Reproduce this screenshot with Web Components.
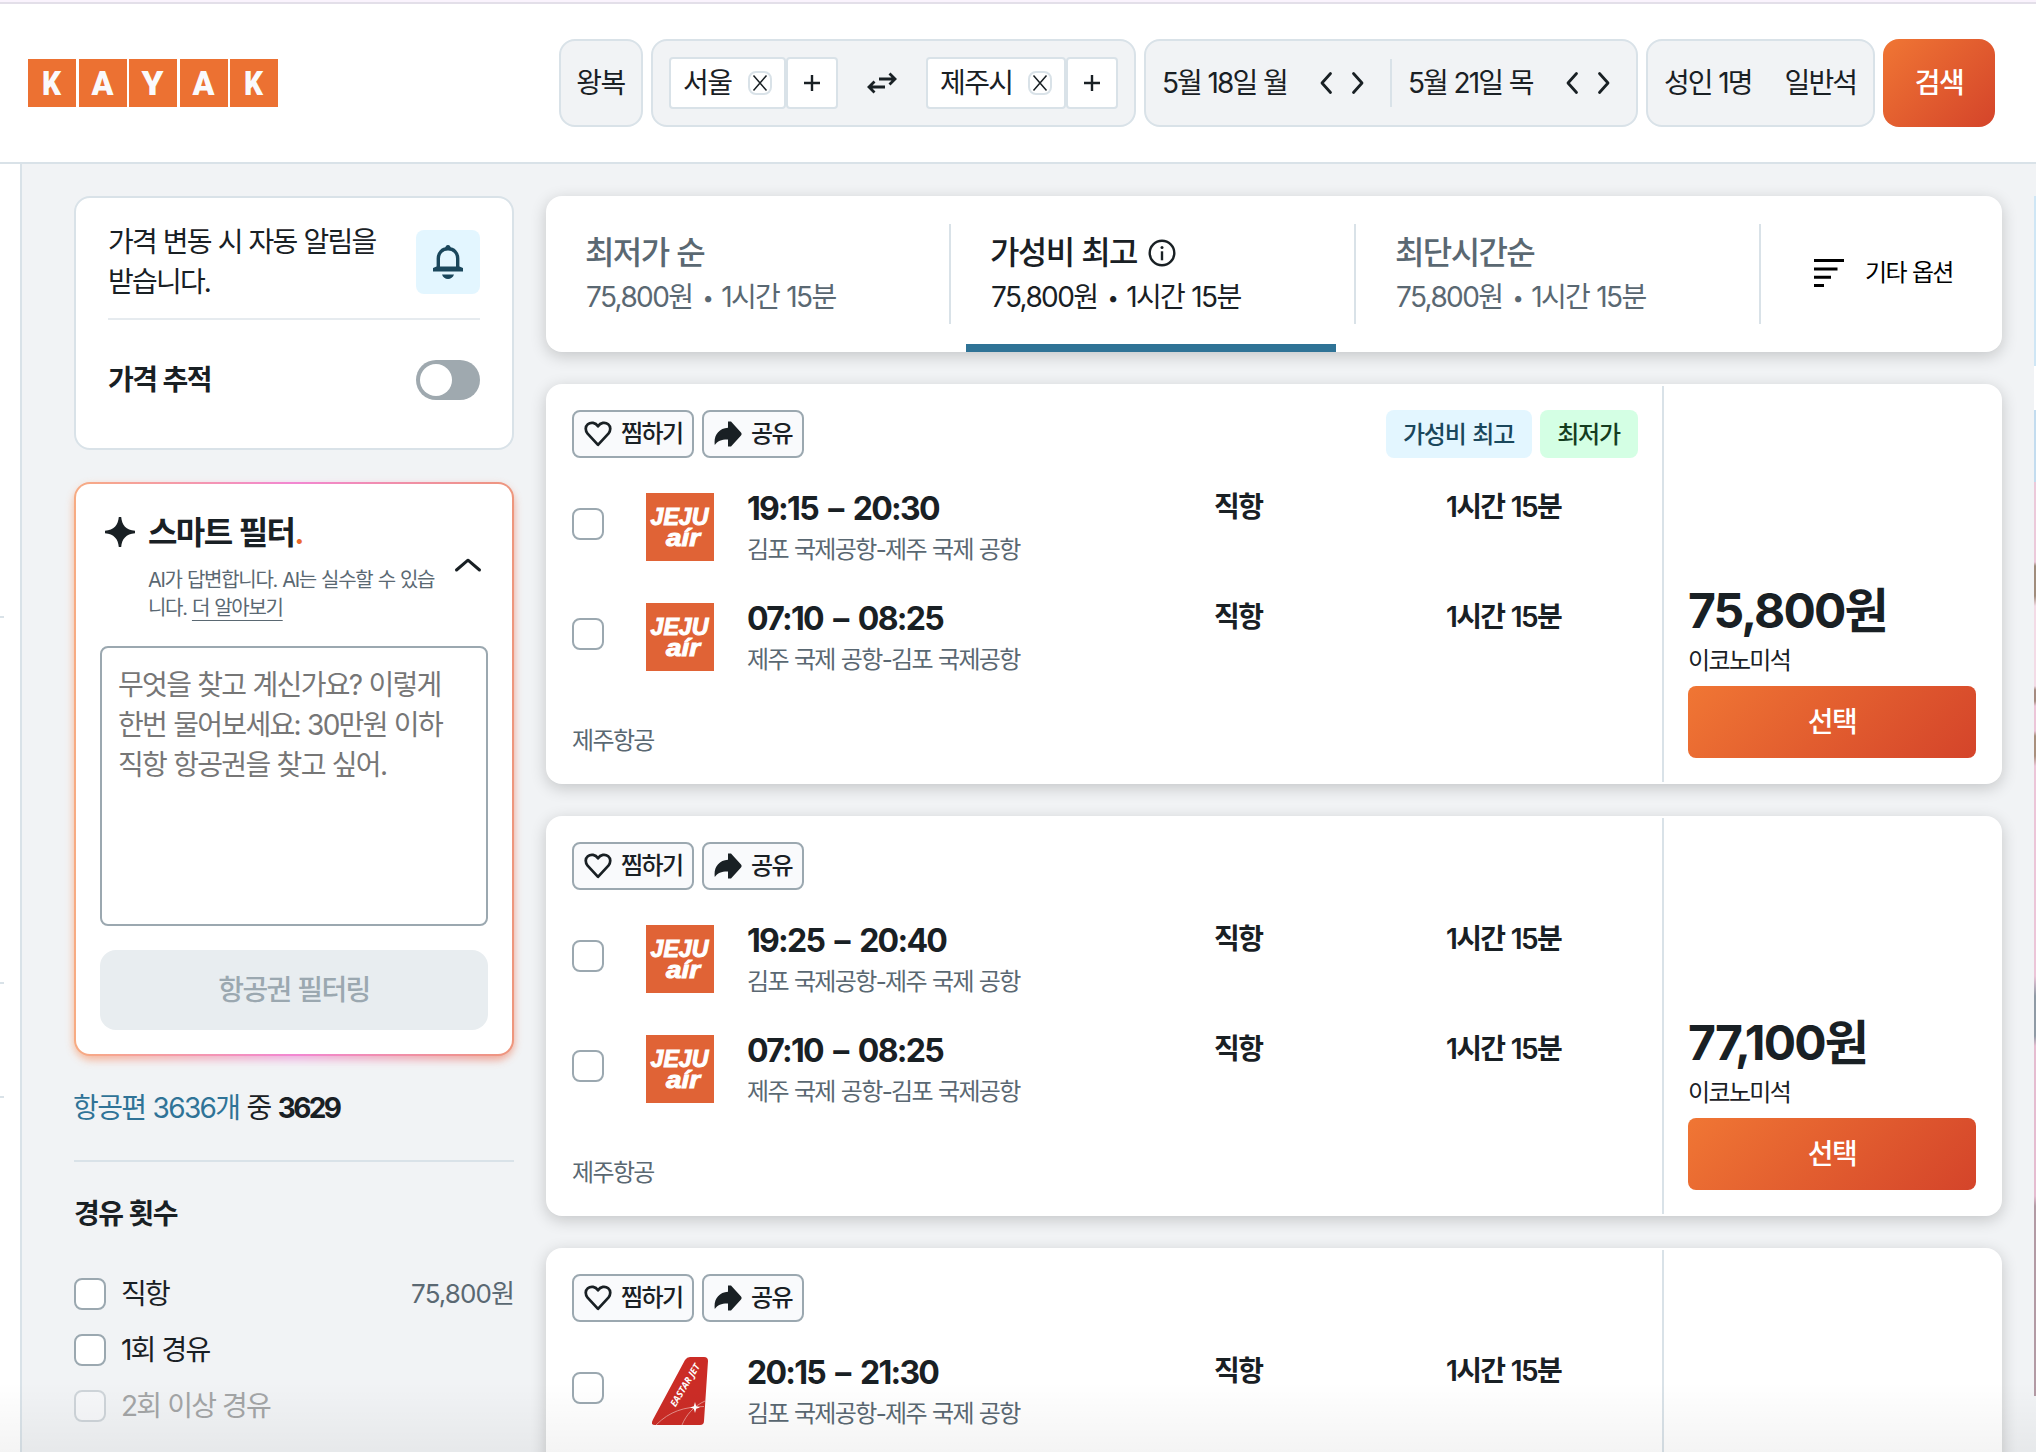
<!DOCTYPE html>
<html lang="ko">
<head>
<meta charset="utf-8">
<title>KAYAK</title>
<style>
  html, body { margin: 0; padding: 0; }
  body {
    width: 2036px;
    height: 1452px;
    overflow: hidden;
    background: #fff;
    color: #192024;
    font-family: Inter, "Noto Sans CJK KR", sans-serif;
    font-size: 28px;
    line-height: 40px;
    letter-spacing: -0.058em;
    word-spacing: 0.03em;
    --line: #d9e2e8;
    --fill: #f1f3f5;
    --muted: #5a6872;
    --edge: #9ba8b0;
    --brand: linear-gradient(135deg, #f07634, #d4442a);
  }
</style>
</head>
<body>
<flight-page></flight-page>

<script>
// Shared reset, every shadow root starts with it
const BASE = `
  *, *::before, *::after { box-sizing: border-box; }
  :host { display: block; box-sizing: border-box; white-space: nowrap; }
  svg { display: block; flex: none; }
`;

function define(name, css, html) {
  customElements.define(name, class extends HTMLElement {
    constructor() {
      super();
      this.attachShadow({ mode: 'open' });
    }
    connectedCallback() {
      const body = typeof html === 'function' ? html(this) : html;
      this.shadowRoot.innerHTML = `<style>${BASE}${css}</style>${body}`;
    }
  });
}

// ---------- icons ----------
const ICONS = {
  close: '<svg width="16" height="18" viewBox="0 0 16 18"><path d="M1.5 1.5l13 15M14.5 1.5l-13 15" stroke="#192024" stroke-width="1.5" fill="none"/></svg>',
  plus: '<svg width="18" height="18" viewBox="0 0 18 18"><path d="M9 1v16M1 9h16" stroke="#192024" stroke-width="2.400" fill="none"/></svg>',
  swap: '<svg width="30" height="22" viewBox="0 0 30 22"><path d="M12 7h15.500M22.500 1.500l5.500 5.500-5.500 5.500M18 15H2.500M7.500 9.500L2 15l5.500 5.500" stroke="#192024" stroke-width="2.800" fill="none"/></svg>',
  left: '<svg width="14" height="24" viewBox="0 0 14 24"><path d="M11.500 2.500L3 12l8.500 9.500" stroke="#192024" stroke-width="2.800" fill="none" stroke-linecap="round" stroke-linejoin="round"/></svg>',
  right: '<svg width="14" height="24" viewBox="0 0 14 24"><path d="M2.500 2.500L11 12l-8.500 9.500" stroke="#192024" stroke-width="2.800" fill="none" stroke-linecap="round" stroke-linejoin="round"/></svg>',
  up: '<svg width="28" height="16" viewBox="0 0 28 16"><path d="M2.500 13L14 3.200 25.500 13" stroke="#192024" stroke-width="3" fill="none" stroke-linecap="round" stroke-linejoin="round"/></svg>',
  bell: '<svg width="30" height="34" viewBox="0 0 30 34"><path d="M5.300 24V13.500C5.300 8 9 3.800 15 3.800S24.700 8 24.700 13.500V24" fill="none" stroke="#1a475c" stroke-width="3.400"/><path d="M12 4.500C12 1.800 13.200 0 15 0s3 1.800 3 4.500zM0 26.500V23l3.500-1.500h23L30 23v3.500zM9 29.500h12c-1 2.800-3.200 4.500-6 4.500s-5-1.700-6-4.500z" fill="#1a475c"/></svg>',
  spark: '<svg width="30" height="30" viewBox="0 0 30 30"><path d="M13.800 0h2.400c.7 8 4.800 13.100 13.800 13.800v2.400C21 16.900 16.900 22 16.200 30h-2.400C13.100 22 9 16.900 0 16.200v-2.400C9 13.100 13.100 8 13.800 0z" fill="#192024"/></svg>',
  info: '<svg width="28" height="28" viewBox="0 0 28 28"><circle cx="14" cy="14" r="12.300" fill="none" stroke="#192024" stroke-width="2.400"/><circle cx="14" cy="8.500" r="1.500" fill="#192024"/><path d="M14 12.300v9" stroke="#192024" stroke-width="2.400"/></svg>',
  sort: '<svg width="30" height="28" viewBox="0 0 30 28"><path d="M0 1.500h30M0 9.900h23.500M0 18.200h17M0 26.500h10" stroke="#000" stroke-width="3"/></svg>',
  heart: '<svg width="28" height="26" viewBox="0 0 28 26"><path d="M14 23.800L3.600 12.600C1 9.500 1.200 5.500 3.800 3.300 6.800.800 11.500 1.400 14 5.300c2.500-3.900 7.200-4.500 10.200-2 2.600 2.200 2.800 6.200.2 9.300z" fill="none" stroke="#192024" stroke-width="2.700" stroke-linejoin="round"/></svg>',
  share: '<svg width="28" height="26" viewBox="0 0 28 26"><path d="M14 .500h3L27 11.500c.8.900.8 2.100 0 3L17 25.500h-3V18.500C8 18.300 3.500 20 .800 24-.600 15 4.500 7.200 14 6.800z" fill="#192024"/></svg>',
};

define('kayak-logo', `
  :host { display: flex; gap: 2.500px; }
  svg { background: #ec7132; }
`, () => [...'KAYAK'].map(c => `
  <svg width="48" height="48" viewBox="0 0 48 48">
    <text x="23.500" y="36" text-anchor="middle" textLength="${c === 'K' ? 19 : 22}" lengthAdjust="spacingAndGlyphs"
      font-family="Roboto, sans-serif" font-weight="900" font-size="34" fill="#fafafc" letter-spacing="0">${c}</text>
  </svg>`).join(''));

// Place chip in the search bar: name, remove box and add button
define('place-chip', `
  :host { display: flex; }
  div {
    height: 52px; border: 2px solid var(--line); border-radius: 4px; background: #fff;
    display: flex; align-items: center;
  }
  .name { padding: 0 12px 0 12px; justify-content: space-between; width: var(--chip-width); }
  i {
    width: 24px; height: 24px; border: 2px solid var(--line); border-radius: 8px;
    display: flex; align-items: center; justify-content: center;
  }
  .add { width: 52px; justify-content: center; }
`, `
  <div class="name"><span><slot></slot></span><i>${ICONS.close}</i></div>
  <div class="add">${ICONS.plus}</div>
`);

define('search-bar', `
  :host { display: flex; gap: 8px; }
  .box {
    height: 88px; border: 2px solid var(--line); border-radius: 16px; background: var(--fill);
    display: flex; align-items: center;
  }
  .trip { width: 84px; justify-content: center; padding: 0 1px 0 0; }
  .places { width: 485px; padding: 0 16px; justify-content: space-between; }
  .dates { width: 494px; }
  .date { display: flex; align-items: center; flex: 1; padding: 0 25px 0 16px; }
  .date + .date { border-left: 2px solid var(--line); height: 48px; }
  .date svg { margin-left: auto; }
  .date svg + svg { margin-left: 18px; }
  .people { width: 229px; padding: 0 17px 0 16px; justify-content: space-between; }
  .go { width: 112px; border: 0; background: var(--brand); color: #fff; justify-content: center; font-weight: 500; }
  .date, .people { letter-spacing: -0.07em; }
`, `
  <div class="box trip">왕복</div>
  <div class="box places">
    <place-chip style="--chip-width:117px">서울</place-chip>
    ${ICONS.swap}
    <place-chip style="--chip-width:140px">제주시</place-chip>
  </div>
  <div class="box dates">
    <div class="date">5월 18일 월 ${ICONS.left}${ICONS.right}</div>
    <div class="date">5월 21일 목 ${ICONS.left}${ICONS.right}</div>
  </div>
  <div class="box people"><span>성인 1명</span><span>일반석</span></div>
  <div class="box go">검색</div>
`);

define('top-header', `
  :host {
    height: 164px; border-top: 2px solid #faf3fd; border-bottom: 2px solid var(--line);
    background: #fff; box-shadow: inset 0 2px #e3dfe9;
    display: flex; align-items: center; justify-content: space-between; padding: 2px 41px 0 28px;
  }
`, `<kayak-logo></kayak-logo><search-bar></search-bar>`);

define('price-alert', `
  :host {
    height: 254px; border: 2px solid var(--line); border-radius: 16px; background: #fff;
    padding: 24px 32px 0; letter-spacing: -0.064em;
  }
  .row { display: flex; align-items: center; justify-content: space-between; }
  .bell {
    width: 64px; height: 64px; border-radius: 8px; background: #e3f6ff;
    display: flex; align-items: center; justify-content: center;
  }
  hr { height: 2px; border: 0; margin: 16px 0 40px; background: #e6ebef; }
  b { font-weight: 600; letter-spacing: -0.058em; }
  .toggle { width: 64px; height: 40px; border-radius: 20px; background: #9fa9af; padding: 4px; }
  .toggle::before { content: ""; display: block; width: 32px; height: 32px; border-radius: 50%; background: #fff; }
`, `
  <div class="row"><span>가격 변동 시 자동 알림을<br>받습니다.</span><span class="bell">${ICONS.bell}</span></div>
  <hr>
  <div class="row"><b>가격 추적</b><span class="toggle"></span></div>
`);

define('smart-filter', `
  :host {
    height: 574px; margin-top: 32px; border: 2px solid transparent; border-radius: 16px; padding: 24px;
    background:
      linear-gradient(#fff, #fff) padding-box,
      linear-gradient(90deg, #f7ab82, #f287d2 50%, #ee967c) border-box;
    position: relative;
  }
  /* coloured glow under the card */
  :host::before {
    content: ""; position: absolute; z-index: -1; inset: 2px -2px -6px; border-radius: 18px;
    background: linear-gradient(90deg, #f7ab82, #f0a0dc 50%, #ee967c); filter: blur(4px); opacity: .85;
  }
  .head { display: flex; height: 114px; padding: 4px 6px 0 5px; }
  .text { margin-left: 13px; flex: 1; }
  .spark { margin-top: 5px; }
  h2 { margin: 0; font-size: 32px; line-height: 42px; font-weight: 600; }
  h2 span { color: #ec6a2c; }
  p { margin: 12px 0 0; font-size: 20px; line-height: 28px; color: var(--muted); letter-spacing: -0.064em; }
  u { text-underline-offset: 5px; text-decoration-thickness: 1px; }
  .up { margin-top: 45px; }
  .area {
    height: 280px; margin-top: 24px; border: 2px solid var(--edge); border-radius: 8px; padding: 17px 16px;
    color: #767676; letter-spacing: -0.06em;
  }
  .btn {
    height: 80px; margin-top: 24px; border-radius: 16px; background: #e8edf0; color: var(--edge);
    font-weight: 500; display: flex; align-items: center; justify-content: center;
  }
`, `
  <div class="head">
    <span class="spark">${ICONS.spark}</span>
    <div class="text">
      <h2>스마트 필터<span>.</span></h2>
      <p>AI가 답변합니다. AI는 실수할 수 있습<br>니다. <u>더 알아보기</u></p>
    </div>
    <span class="up">${ICONS.up}</span>
  </div>
  <div class="area">무엇을 찾고 계신가요? 이렇게<br>한번 물어보세요: 30만원 이하<br>직항 항공권을 찾고 싶어.</div>
  <div class="btn">항공권 필터링</div>
`);

define('check-box', `
  :host { width: 32px; height: 32px; border: 2px solid var(--edge); border-radius: 8px; background: #fff; flex: none; }
`, '');

define('filter-option', `
  :host { display: flex; align-items: center; height: 56px; }
  :host([disabled]) check-box { opacity: .4; }
  :host([disabled]) .name { color: #a3a5a6; }
  .name { margin-left: 15px; flex: 1; letter-spacing: -0.064em; }
  .price { font-size: 26px; color: var(--muted); letter-spacing: -0.035em; }
`, el => `
  <check-box></check-box>
  <span class="name"><slot></slot></span>
  <span class="price">${el.getAttribute('price') || ''}</span>
`);

define('side-bar', `
  :host { width: 440px; }
  .count { margin: 32px 0 0 -1px; }
  .count a { color: #2f7397; }
  .count b { font-weight: 700; letter-spacing: -0.095em; }
  hr { height: 2px; border: 0; margin: 32px 0 0; background: var(--line); }
  h3 { margin: 32px 0 32px; font-size: 28px; font-weight: 600; line-height: 40px; }
`, `
  <price-alert></price-alert>
  <smart-filter></smart-filter>
  <div class="count"><a>항공편 3636개</a> 중 <b>3629</b></div>
  <hr>
  <h3>경유 횟수</h3>
  <filter-option price="75,800원">직항</filter-option>
  <filter-option>1회 경유</filter-option>
  <filter-option disabled>2회 이상 경유</filter-option>
`);

define('sort-tab', `
  :host { width: 405px; height: 156px; padding: 37px 0 0 40px; color: var(--muted); position: relative; }
  :host::after { content: ""; position: absolute; right: 0; top: 28px; width: 2px; height: 100px; background: var(--line); }
  :host([active]) { color: #192024; }
  :host([active])::before {
    content: ""; position: absolute; left: 15px; bottom: 0; width: 370px; height: 8px; background: #2f7396;
  }
  .title {
    font-size: 32px; line-height: 40px; font-weight: 500; display: flex; align-items: center; gap: 11px;
    margin-left: -1px;
  }
  .sub { line-height: 48px; }
  i { font-style: normal; font-size: 20px; margin: 0 2px 0 3px; vertical-align: 2px; line-height: 1; }
`, el => `
  <div class="title"><slot></slot>${el.hasAttribute('active') ? ICONS.info : ''}</div>
  <div class="sub">75,800원 <i>•</i> 1시간 15분</div>
`);

define('sort-tabs', `
  :host {
    display: flex; height: 156px; border-radius: 16px; background: #fff;
    box-shadow: 0 4px 16px rgba(0, 0, 0, .19);
  }
  .more { flex: 1; display: flex; align-items: center; padding: 0 0 3px 53px; gap: 21px; font-size: 24px; color: #000; }
`, `
  <sort-tab>최저가 순</sort-tab>
  <sort-tab active>가성비 최고</sort-tab>
  <sort-tab>최단시간순</sort-tab>
  <div class="more">${ICONS.sort}<span>기타 옵션</span></div>
`);

const LOGOS = {
  jeju: `
    <svg width="68" height="68" viewBox="0 0 68 68" fill="#fff" font-family="Liberation Sans" font-weight="700" font-style="italic" letter-spacing="0">
      <rect width="68" height="68" fill="#e06336"/>
      <g stroke="#fff" stroke-width="1">
        <text x="4.500" y="31.500" font-size="23" textLength="58" lengthAdjust="spacingAndGlyphs">JEJU</text>
        <text x="20" y="52.500" font-size="24" textLength="34" lengthAdjust="spacingAndGlyphs">aír</text>
      </g>
    </svg>`,
  eastar: `
    <svg width="68" height="68" viewBox="0 0 68 68">
      <path d="M44 0h14q4 0 4 4l-4 60q0 4-4 4H9q-5 0-2-5.500L39 3q2-3 5-3z" fill="#cb2c26"/>
      <path d="M10 68C24 54 38 50 58 49.500M36 68C40 58 48 49 59 44" fill="none" stroke="#e79a94" stroke-width=".900"/>
      <path d="M49 45l1.200 4.300 3.800 1.200-3.800 1.200L49 56l-1.200-4.300-3.800-1.200 3.800-1.200z" fill="#fff"/>
      <text transform="translate(29.500 50.500) rotate(-59)" font-family="Open Sans" font-weight="700" font-style="italic"
        font-size="9.500" textLength="48" lengthAdjust="spacingAndGlyphs" fill="#fff" letter-spacing="0" word-spacing="0">EASTAR JET</text>
    </svg>`,
};

define('flight-leg', `
  :host { display: grid; grid-template: 80px / 74px 101px 467px 232px 1fr; height: 80px; align-items: center; }
  check-box { margin-bottom: 6px; }
  .time { font-size: 32px; line-height: 42px; font-weight: 700; letter-spacing: -0.054em; word-spacing: 0.14em; margin-top: 1px; }
  .route { font-size: 24px; line-height: 39px; color: var(--muted); margin-bottom: -2px; }
  .cell { align-self: start; font-weight: 600; }
`, el => `
  <check-box></check-box>
  ${LOGOS[el.getAttribute('logo')]}
  <div>
    <div class="time">${el.getAttribute('time')}</div>
    <div class="route">${el.getAttribute('route')}</div>
  </div>
  <span class="cell">직항</span>
  <span class="cell">1시간 15분</span>
`);

define('pill-button', `
  :host {
    display: flex; align-items: center; gap: 9px; height: 48px; padding: 0 10px 0 10px;
    border: 2px solid var(--edge); border-radius: 8px; background: #f9fafc;
    font-size: 24px; font-weight: 500;
  }
`, el => `${ICONS[el.getAttribute('icon')]}<span><slot></slot></span>`);

define('flight-card', `
  :host {
    display: flex; height: 400px; margin-top: 32px; border-radius: 16px; background: #fff;
    box-shadow: 0 4px 16px rgba(0, 0, 0, .19); flex: none;
  }
  .main { width: 1116px; padding: 26px 24px 0 26px; }
  .bar { display: flex; gap: 8px; margin-bottom: 29px; }
  .badges { margin-left: auto; display: flex; gap: 8px; }
  .legs { display: flex; flex-direction: column; gap: 30px; height: 190px; }
  .airline { margin-top: 48px; font-size: 24px; line-height: 32px; color: var(--muted); }
  .side {
    flex: 1; margin: 2px 0; border-left: 2px solid var(--line); padding: 0 26px 24px 24px;
    display: flex; flex-direction: column; justify-content: flex-end;
  }
  .price { font-size: 48px; line-height: 56px; font-weight: 700; letter-spacing: -0.039em; }
  .cabin { font-size: 24px; line-height: 32px; margin: 6px 0 9px; }
  .select {
    height: 72px; border-radius: 8px; background: var(--brand); color: #fff; font-weight: 500;
    display: flex; align-items: center; justify-content: center;
  }
  .pick-1 { width: 122px; }
  .pick-2 { width: 102px; }
`, el => `
  <div class="main">
    <div class="bar">
      <pill-button class="pick-1" icon="heart">찜하기</pill-button>
      <pill-button class="pick-2" icon="share">공유</pill-button>
      <div class="badges"><slot name="badge"></slot></div>
    </div>
    <div class="legs"><slot></slot></div>
    <div class="airline">${el.getAttribute('airline') || ''}</div>
  </div>
  <div class="side">
    ${el.hasAttribute('price') ? `
      <div class="price">${el.getAttribute('price')}</div>
      <div class="cabin">이코노미석</div>
      <div class="select">선택</div>` : ''}
  </div>
`);

define('result-badge', `
  :host {
    height: 48px; line-height: 49px; padding: 0 18px 0 17px; border-radius: 8px; font-size: 24px; font-weight: 500;
    background: #e3f6ff; color: #1a475c; letter-spacing: -0.047em; word-spacing: 0.05em;
  }
  :host([tone="green"]) { background: #d4ffe4; color: #143d1f; }
`, '<slot></slot>');

define('result-list', `
  :host { width: 1456px; }
`, `
  <sort-tabs></sort-tabs>
  <flight-card price="75,800원" airline="제주항공">
    <result-badge slot="badge">가성비 최고</result-badge>
    <result-badge slot="badge" tone="green">최저가</result-badge>
    <flight-leg logo="jeju" time="19:15 – 20:30" route="김포 국제공항-제주 국제 공항"></flight-leg>
    <flight-leg logo="jeju" time="07:10 – 08:25" route="제주 국제 공항-김포 국제공항"></flight-leg>
  </flight-card>
  <flight-card price="77,100원" airline="제주항공">
    <flight-leg logo="jeju" time="19:25 – 20:40" route="김포 국제공항-제주 국제 공항"></flight-leg>
    <flight-leg logo="jeju" time="07:10 – 08:25" route="제주 국제 공항-김포 국제공항"></flight-leg>
  </flight-card>
  <flight-card>
    <flight-leg logo="eastar" time="20:15 – 21:30" route="김포 국제공항-제주 국제 공항"></flight-leg>
  </flight-card>
`);

define('flight-page', `
  :host { height: 1452px; overflow: hidden; position: relative; display: flex; flex-direction: column; }
  main { flex: 1; min-height: 0; display: flex; }
  /* collapsed navigation rail, only its dividers peek in */
  .rail {
    width: 22px; border-right: 2px solid var(--line);
    background:
      linear-gradient(var(--line), var(--line)) 0 452px / 4px 2px no-repeat,
      linear-gradient(var(--line), var(--line)) 0 818px / 4px 2px no-repeat,
      linear-gradient(var(--line), var(--line)) 0 932px / 4px 2px no-repeat, #fff;
  }
  .content { flex: 1; display: flex; gap: 32px; padding: 32px 0 0 52px; background: var(--fill); position: relative; z-index: 0; }
  .ad {
    width: 2px; margin-left: auto; height: 1200px;
    background: linear-gradient(#cfe6f5 0 170px, #fff 170px 214px, #c3dcef 214px 286px, #ecc9da 286px 366px, #a08c7c 370px 400px,
      #f3dbe6 410px 490px, #a58a80 494px 505px, #ecc5d8 510px 535px, #a98f7d 540px 560px, #ecc5d8 570px 780px,
      #8f9aa5 800px 840px, #e5bcd0 850px 1000px, #b29aa4 1010px);
  }
  .fade {
    position: absolute; left: 0; right: 0; bottom: 0; height: 70px;
    background: linear-gradient(rgba(0, 0, 0, 0), rgba(0, 0, 0, .045));
  }
`, `
  <top-header></top-header>
  <main>
    <div class="rail"></div>
    <div class="content">
      <side-bar></side-bar>
      <result-list></result-list>
      <div class="ad"></div>
    </div>
  </main>
  <div class="fade"></div>
`);
</script>
</body>
</html>
